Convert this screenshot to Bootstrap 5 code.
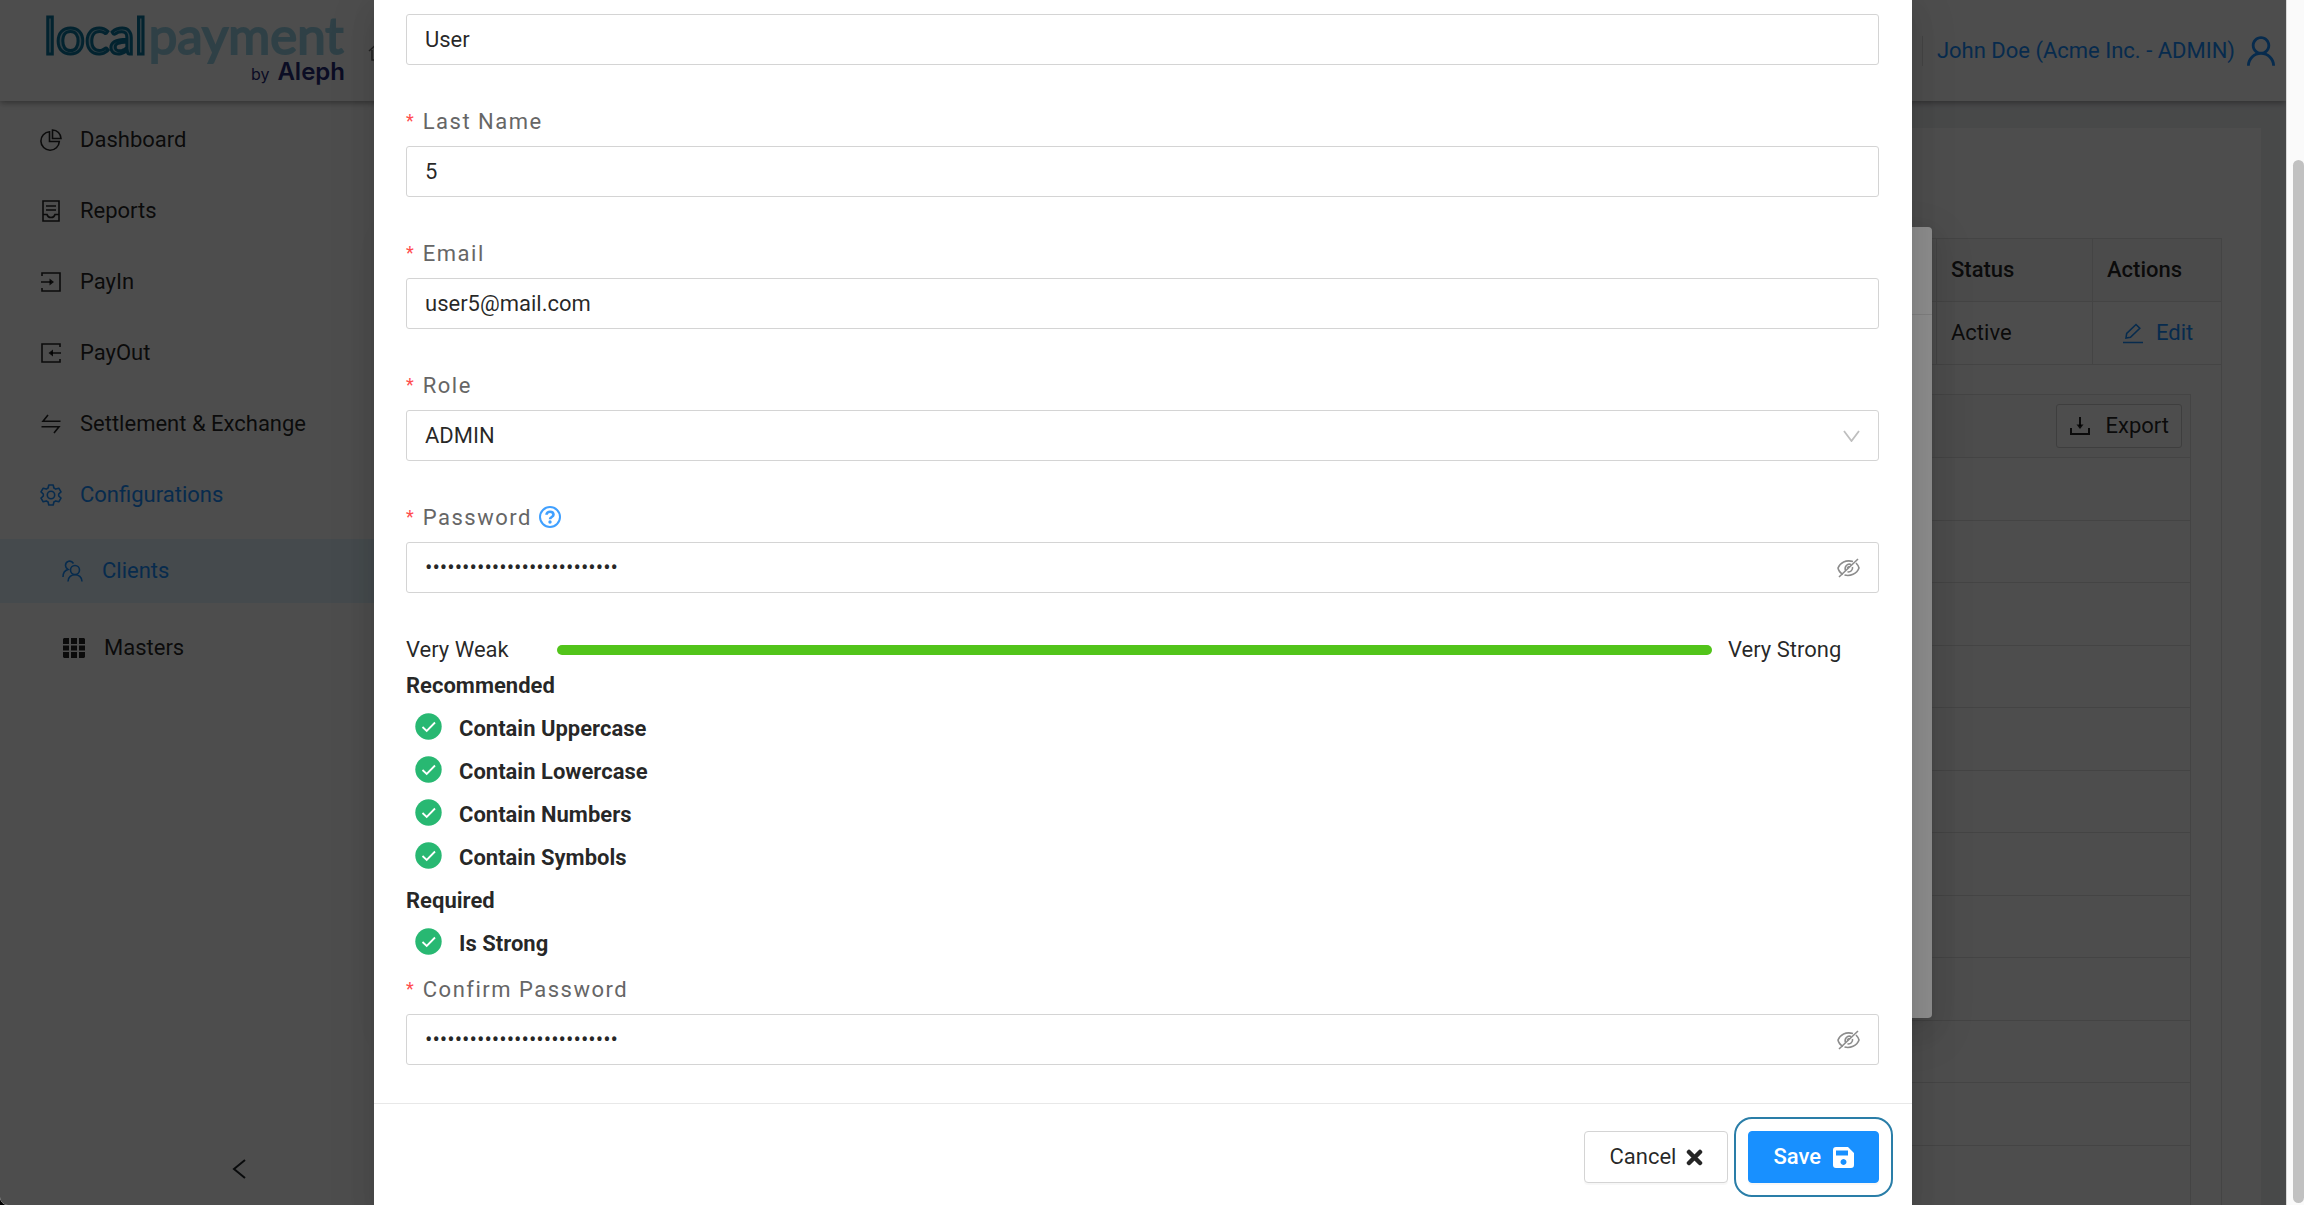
<!DOCTYPE html>
<html lang="en">
<head>
<meta charset="utf-8">
<meta name="viewport" content="width=device-width, initial-scale=1">
<title>Localpayment - Clients</title>
<link href="https://cdn.jsdelivr.net/npm/bootstrap@5.3.0/dist/css/bootstrap.min.css" rel="stylesheet">
<style>
  :root { --ink: rgba(0,0,0,.85); --blue: #1890ff; --line: #e2e2e2; }
  body { font-family: Roboto, "Liberation Sans", sans-serif; font-size: 22px; line-height: 34px; color: var(--ink); background: #000; }
  svg { display: block; flex: none; }
  .ln { fill: none; stroke: currentColor; stroke-width: 1.6; }
  .app { background: #fff; border-bottom-left-radius: 8px; }

  /* header */
  .topbar { height: 101px; box-shadow: 0 2px 6px rgba(0,0,0,.35); z-index: 2; }
  .brand { width: 301px; margin-left: 44px; padding-top: 5px; }
  .brand-word { font-family: Lato, sans-serif; font-size: 51px; line-height: 60px; gap: 2px; }
  .brand-local { color: #a8d4e6; -webkit-text-stroke: 3px #0c769f; }
  .brand-pay { color: #9fd8ea; -webkit-text-stroke: 2px #9fd8ea; }
  .brand-by { color: #272c78; font-family: Inter, sans-serif; font-size: 16px; line-height: 22px; margin-top: -4px; }
  .brand-by strong { font-size: 24px; font-weight: 600; }
  .crumb { color: #777; margin-left: 23px; }
  .account { color: var(--blue); border-left: 1px solid var(--line); padding: 0 11px 0 14px; line-height: 20px; }

  /* side menu */
  .side { width: 400px; padding-top: 3px; }
  .side a { color: var(--ink); height: 71px; padding: 0 0 0 40px; gap: 18px; }
  .side .submenu a { height: 64px; padding-left: 62px; }
  .side .submenu { padding-top: 9px; gap: 13px; }
  .side a.active { color: var(--blue); }
  .submenu a.active { background: #e6f7ff; }
  .fold { padding: 0 154px 26px; }

  /* page behind the dialogs */
  .stage { background: #f0f2f5; padding: 27px 25px 0 0; }
  .sheet { background: #fff; padding: 110px 39px 0 24px; }
  .grid { border: 1px solid var(--line); table-layout: fixed; color: inherit; }
  .grid th, .grid td { border: 1px solid var(--line); height: 63px; padding: 0 14px; vertical-align: middle; }
  .grid th { background: #fafafa; font-weight: 500; }
  .grid td.nested { padding: 29px 30px 0; }
  .col-status { width: 156px; }
  .col-actions { width: 129px; }
  .edit { color: var(--blue); gap: 13px; padding-left: 15px; }
  .inner { border: 1px solid var(--line); border-bottom: 0; }
  .inner-head { height: 62px; background: #fcfcfc; padding-right: 8px; }
  .export { border: 1px solid #d0d0d0; border-radius: 3px; height: 44px; padding: 0 12px; gap: 14px; background: #fff; color: inherit; font-size: 22px; }
  .rows td { border-width: 1px 0; height: 63px; }
  .rows tr:nth-child(even) td { height: 62px; }

  /* dialogs */
  .shade { background: rgba(0,0,0,.45); }
  .popup { box-shadow: 0 4px 9px -6px rgba(0,0,0,.12), 0 9px 24px rgba(0,0,0,.08), 0 14px 42px 12px rgba(0,0,0,.05); }
  .popup-back { background: #fff; left: 400px; right: 354px; top: 227px; height: 791px; border-radius: 4px; }
  .popup-back-head { height: 88px; border-bottom: 1px solid #e6e6e6; }
  .popup-front { background: #fff; max-width: 1538px; min-height: 100%; }
  .popup-body { padding: 14px 33px 0 32px; }
  .field { margin-bottom: 38px; }
  .field label { color: #666; letter-spacing: 1.5px; }
  .label-row { height: 36px; margin-bottom: 7px; gap: 2px; }
  .star { color: #ff4d4f; font-size: 18px; margin-right: 9px; letter-spacing: 0; vertical-align: 2px; }
  .box { height: 51px; border: 1px solid #d4d4d4; border-radius: 3px; padding: 0 18px; font-size: 22px; color: var(--ink); background: #fff; width: 100%; display: block; appearance: none; }
  .tail { right: 19px; top: 0; height: 51px; color: #8c8c8c; border: 0; background: none; padding: 0; }
  .help { color: #40a0ff; }
  .meter { height: 33px; padding-top: 5px; }
  .meter-label { width: 151px; }
  .meter-end { width: 151px; }
  .meter-bar { height: 10px; border-radius: 5px; background: #52c41a; }
  .rules { font-weight: 700; }
  .rules h6 { font-size: 22px; font-weight: 700; line-height: 43px; margin: 0; color: inherit; }
  .rules li { height: 43px; padding-left: 9px; gap: 17px; }
  .rules svg { margin-bottom: 4px; }
  .strength { margin-bottom: 6px; }
  .popup-foot { border-top: 1px solid #e8e8e8; padding: 27px 33px 27px 32px; gap: 20px; }
  .act { height: 52px; border: 1px solid #d4d4d4; border-radius: 4px; font-size: 22px; padding: 0 24px; gap: 10px; background: #fff; color: var(--ink); box-shadow: 0 2px 1px rgba(0,0,0,.03); }
  .act-save { background: var(--blue); border-color: var(--blue); color: #fff; outline: 2px solid #2a7ea8; outline-offset: 12px; gap: 12px; font-weight: 500; }

  /* scroll track */
  .track { width: 18px; background: #fafafa; border-left: 1px solid #d8d8d8; padding: 160px 0 2px 6px; }
  .thumb { background: #c1c1c1; border-radius: 6px; }
</style>
<script src="https://cdn.jsdelivr.net/npm/bootstrap@5.3.0/dist/js/bootstrap.bundle.min.js"></script>
</head>
<body class="vh-100 overflow-hidden d-flex">

<div class="app flex-grow-1 position-relative overflow-hidden d-flex flex-column h-100">

  <header class="topbar position-relative d-flex align-items-center bg-white flex-shrink-0">
    <div class="brand d-flex flex-column align-self-start">
      <div class="brand-word d-flex"><span class="brand-local">local</span><span class="brand-pay">payment</span></div>
      <div class="brand-by d-flex justify-content-end align-items-baseline gap-2"><span>by</span><strong>Aleph</strong></div>
    </div>
    <a class="crumb" href="#" aria-label="Home"><svg width="22" height="22" viewBox="0 0 22 22"><path class="ln" d="M1 11 11 2l10 9M4 10v10h14V10"/></svg></a>
    <a class="account ms-auto d-flex align-items-center gap-2 text-decoration-none" href="#">
      <span>John Doe (Acme Inc. - ADMIN)</span>
      <svg class="ms-1" width="28" height="30" viewBox="136 114 752 796" fill="currentColor"><path d="M858.500 763.600a374 374 0 00-80.600-119.500 375.630 375.630 0 00-119.500-80.600c-.4-.2-.8-.3-1.200-.5C719.500 518 760 444.700 760 362c0-137-111-248-248-248S264 225 264 362c0 82.700 40.500 156 102.800 201.100-.4.2-.8.3-1.200.5-44.800 18.900-85 46-119.500 80.600a375.630 375.630 0 00-80.600 119.500A371.700 371.700 0 00136 901.800a8 8 0 008 8.200h60c4.400 0 7.900-3.500 8-7.800 2-77.200 33-149.500 87.800-204.300 56.700-56.700 132-87.900 212.200-87.900s155.500 31.200 212.200 87.900C779 752.700 810 825 812 902.200c.1 4.400 3.600 7.800 8 7.800h60a8 8 0 008-8.200c-1-47.800-10.900-94.300-29.500-138.200zM512 534c-45.900 0-89.100-17.900-121.600-50.400S340 407.900 340 362c0-45.900 17.900-89.100 50.400-121.600S466.100 190 512 190s89.100 17.900 121.600 50.400S684 316.100 684 362c0 45.900-17.900 89.100-50.400 121.600S557.900 534 512 534z"/></svg>
    </a>
  </header>

  <div class="d-flex flex-grow-1 overflow-hidden">
    <nav class="side flex-shrink-0 d-flex flex-column bg-white">
      <a class="nav-link d-flex align-items-center" href="#"><svg width="22" height="22" viewBox="0 0 22 22"><path class="ln" d="M9.500 2.800A9.200 9.200 0 1 0 19.300 12.500H9.500zM12.500 1v8.500H21A8.700 8.700 0 0 0 12.500 1z"/></svg><span>Dashboard</span></a>
      <a class="nav-link d-flex align-items-center" href="#"><svg width="22" height="22" viewBox="0 0 22 22"><path class="ln" d="M3 1h16v20H3zM6 6h10M6 10h10M3 14.500h4c1 4 7 4 8 0h4"/></svg><span>Reports</span></a>
      <a class="nav-link d-flex align-items-center" href="#"><svg width="22" height="22" viewBox="0 0 22 22"><path class="ln" d="M2 5V2h18v18H2v-3M1 11h10"/><path fill="currentColor" d="M9.500 7.500v7L14 11z"/></svg><span>PayIn</span></a>
      <a class="nav-link d-flex align-items-center" href="#"><svg width="22" height="22" viewBox="0 0 22 22"><path class="ln" d="M20 5V2H2v18h18v-3M21 11H11"/><path fill="currentColor" d="M13 7.500v7L8.500 11z"/></svg><span>PayOut</span></a>
      <a class="nav-link d-flex align-items-center" href="#"><svg width="22" height="22" viewBox="0 0 22 22"><path class="ln" d="M20.500 8.300H3L8 2M1.500 13.700H19L14 20"/></svg><span>Settlement &amp; Exchange</span></a>
      <a class="nav-link active d-flex align-items-center" href="#"><svg width="22" height="22" viewBox="0 0 22 22"><circle class="ln" cx="11" cy="11" r="3.700"/><path class="ln" stroke-linejoin="round" d="M8.800 1h4.400l.7 3 1.900 1.100 3-.9 2.200 3.700-2.300 2.100v2l2.300 2.100-2.200 3.700-3-.9-1.900 1.100-.7 3H8.800l-.7-3-1.900-1.100-3 .9L1 14.100 3.300 12v-2L1 7.900l2.200-3.700 3 .9L8.100 4z"/></svg><span>Configurations</span></a>
      <div class="submenu d-flex flex-column">
        <a class="nav-link active d-flex align-items-center" href="#"><svg width="22" height="22" viewBox="0 0 22 22"><circle class="ln" cx="13" cy="10" r="4.500"/><path class="ln" d="M6 21.500c0-9 14-9 14 0M11.500 3.500C9-.5 3.500 1 3.500 5.500c0 2 1 3 2.500 4C2.500 10.500 1 13.500 1 17"/></svg><span>Clients</span></a>
        <a class="nav-link d-flex align-items-center" href="#"><svg width="24" height="22" viewBox="0 0 24 22" fill="currentColor"><path d="M2 1h5v6H1V2zM9 1h6v6H9zM17 1h5l1 1v5h-6zM1 8.500h6v5H1zM9 8.500h6v5H9zM17 8.500h6v5h-6zM1 15h6v6H2l-1-1zM9 15h6v6H9zM17 15h6v5l-1 1h-5z"/></svg><span>Masters</span></a>
      </div>
      <button class="fold btn border-0 mt-auto ms-auto" type="button" aria-label="Collapse menu"><svg width="14" height="20" viewBox="0 0 14 20"><path class="ln" style="stroke-width:2" d="M13 1 2 10l11 9"/></svg></button>
    </nav>

    <main class="stage flex-grow-1 overflow-hidden">
      <div class="sheet">
        <table class="grid w-100">
          <thead><tr><th></th><th class="col-status">Status</th><th class="col-actions">Actions</th></tr></thead>
          <tbody>
            <tr><td></td><td>Active</td><td><a class="edit d-flex align-items-center text-decoration-none" href="#"><svg width="21" height="21" viewBox="0 0 21 21"><path class="ln" d="M1 19.500h20M4 15l.7-4.500L14 1.500l3.800 3.800-9.300 9z"/></svg>Edit</a></td></tr>
            <tr><td class="nested" colspan="3">
              <div class="inner">
                <div class="inner-head d-flex align-items-center justify-content-end">
                  <button class="export d-flex align-items-center" type="button"><svg width="22" height="22" viewBox="0 0 22 22"><path class="ln" style="stroke-width:2" d="M2 13v6h18v-6M11 2v9"/><path fill="currentColor" d="M7.500 9.500h7L11 14z"/></svg>Export</button>
                </div>
                <table class="rows w-100"><tbody>
                  <tr><td></td></tr><tr><td></td></tr><tr><td></td></tr><tr><td></td></tr><tr><td></td></tr><tr><td></td></tr><tr><td></td></tr>
                  <tr><td></td></tr><tr><td></td></tr><tr><td></td></tr><tr><td></td></tr><tr><td></td></tr><tr><td></td></tr>
                </tbody></table>
              </div>
            </td></tr>
          </tbody>
        </table>
      </div>
    </main>
  </div>

  <div class="shade position-absolute top-0 start-0 w-100 h-100 z-3">
    <div class="popup popup-back position-absolute"><div class="popup-back-head"></div></div>
  </div>

  <div class="shade position-absolute top-0 start-0 w-100 h-100 z-3">
    <form class="popup popup-front mx-auto">
      <div class="popup-body">
        <div class="field">
          <input class="box" type="text" aria-label="First Name" value="User">
        </div>
        <div class="field">
          <div class="label-row d-flex align-items-center"><label for="last"><span class="star">*</span>Last Name</label></div>
          <input class="box" id="last" type="text" value="5">
        </div>
        <div class="field">
          <div class="label-row d-flex align-items-center"><label for="mail"><span class="star">*</span>Email</label></div>
          <input class="box" id="mail" type="email" value="user5@mail.com">
        </div>
        <div class="field">
          <div class="label-row d-flex align-items-center"><label for="role"><span class="star">*</span>Role</label></div>
          <div class="position-relative">
            <select class="box" id="role"><option>ADMIN</option></select>
            <span class="tail position-absolute d-flex align-items-center pe-none"><svg width="17" height="12" viewBox="0 0 17 12"><path d="M1 1l7.500 10L16 1" fill="none" stroke="#bfbfbf" stroke-width="1.800"/></svg></span>
          </div>
        </div>
        <div class="field">
          <div class="label-row d-flex align-items-center"><label for="pass"><span class="star">*</span>Password</label>
            <svg class="help ms-1" width="24" height="24" viewBox="0 0 24 24"><circle class="ln" style="stroke-width:2" cx="12" cy="12" r="10"/><path class="ln" style="stroke-width:2.600" d="M8.500 9.800c0-4 7-4 7 0 0 2.200-3.500 2.200-3.500 4.400"/><circle cx="12" cy="17" r="1.700" fill="currentColor"/></svg></div>
          <div class="position-relative">
            <input class="box" id="pass" type="password" value="abcdefghijklmnopqrstuvwxyz">
            <button class="tail position-absolute d-flex align-items-center" type="button" aria-label="Show password"><svg width="23" height="20" viewBox="0 0 23 20"><path class="ln" d="M2 19 21 1M6 16.500C3.500 15 1.500 12.500 1 10 3 4.500 9 1.500 16 3.500M19 5c1.500 1.500 2.700 3.300 3 5-2 6-9 8.500-14.500 7M8.500 12.500C7 8.500 10.500 5 14 6.500M15.500 9c.5 3-2 5.500-5 4.800M10.500 11c0-2 1-2.500 2.500-2.500"/></svg></button>
          </div>
        </div>

        <div class="strength">
          <div class="meter d-flex align-items-center">
            <span class="meter-label">Very Weak</span>
            <div class="meter-bar flex-grow-1" role="progressbar" aria-label="Password strength" aria-valuenow="100" aria-valuemin="0" aria-valuemax="100"></div>
            <span class="meter-end ms-3">Very Strong</span>
          </div>
          <div class="rules">
            <h6>Recommended</h6>
            <ul class="list-unstyled mb-0">
              <li class="d-flex align-items-center"><svg width="27" height="27" viewBox="0 0 27 27"><circle cx="13.500" cy="13.500" r="13.200" fill="#28b872"/><path d="M7.500 14l4.200 4L20 9.500" fill="none" stroke="#fff" stroke-width="1.800"/></svg>Contain Uppercase</li>
              <li class="d-flex align-items-center"><svg width="27" height="27" viewBox="0 0 27 27"><circle cx="13.500" cy="13.500" r="13.200" fill="#28b872"/><path d="M7.500 14l4.200 4L20 9.500" fill="none" stroke="#fff" stroke-width="1.800"/></svg>Contain Lowercase</li>
              <li class="d-flex align-items-center"><svg width="27" height="27" viewBox="0 0 27 27"><circle cx="13.500" cy="13.500" r="13.200" fill="#28b872"/><path d="M7.500 14l4.200 4L20 9.500" fill="none" stroke="#fff" stroke-width="1.800"/></svg>Contain Numbers</li>
              <li class="d-flex align-items-center"><svg width="27" height="27" viewBox="0 0 27 27"><circle cx="13.500" cy="13.500" r="13.200" fill="#28b872"/><path d="M7.500 14l4.200 4L20 9.500" fill="none" stroke="#fff" stroke-width="1.800"/></svg>Contain Symbols</li>
            </ul>
            <h6>Required</h6>
            <ul class="list-unstyled mb-0">
              <li class="d-flex align-items-center"><svg width="27" height="27" viewBox="0 0 27 27"><circle cx="13.500" cy="13.500" r="13.200" fill="#28b872"/><path d="M7.500 14l4.200 4L20 9.500" fill="none" stroke="#fff" stroke-width="1.800"/></svg>Is Strong</li>
            </ul>
          </div>
        </div>

        <div class="field">
          <div class="label-row d-flex align-items-center"><label for="again"><span class="star">*</span>Confirm Password</label></div>
          <div class="position-relative">
            <input class="box" id="again" type="password" value="abcdefghijklmnopqrstuvwxyz">
            <button class="tail position-absolute d-flex align-items-center" type="button" aria-label="Show password"><svg width="23" height="20" viewBox="0 0 23 20"><path class="ln" d="M2 19 21 1M6 16.500C3.500 15 1.500 12.500 1 10 3 4.500 9 1.500 16 3.500M19 5c1.500 1.500 2.700 3.300 3 5-2 6-9 8.500-14.500 7M8.500 12.500C7 8.500 10.500 5 14 6.500M15.500 9c.5 3-2 5.500-5 4.800M10.500 11c0-2 1-2.500 2.500-2.500"/></svg></button>
          </div>
        </div>
      </div>
      <div class="popup-foot d-flex justify-content-end">
        <button class="act d-flex align-items-center" type="button">Cancel<svg width="17" height="17" viewBox="0 0 17 17"><path d="M3 3l11 11M14 3L3 14" stroke="currentColor" stroke-width="4.500" stroke-linecap="round"/></svg></button>
        <button class="act act-save d-flex align-items-center" type="submit">Save<svg width="21" height="21" viewBox="0 0 21 21"><path fill="currentColor" fill-rule="evenodd" d="M3 0h12l6 6v12a3 3 0 0 1-3 3H3a3 3 0 0 1-3-3V3a3 3 0 0 1 3-3zM3 3.500v5h12v-5zM10.500 12a3 3 0 1 0 .01 0z"/></svg></button>
      </div>
    </form>
  </div>
</div>

<div class="track flex-shrink-0 h-100"><div class="thumb h-100"></div></div>

</body>
</html>
